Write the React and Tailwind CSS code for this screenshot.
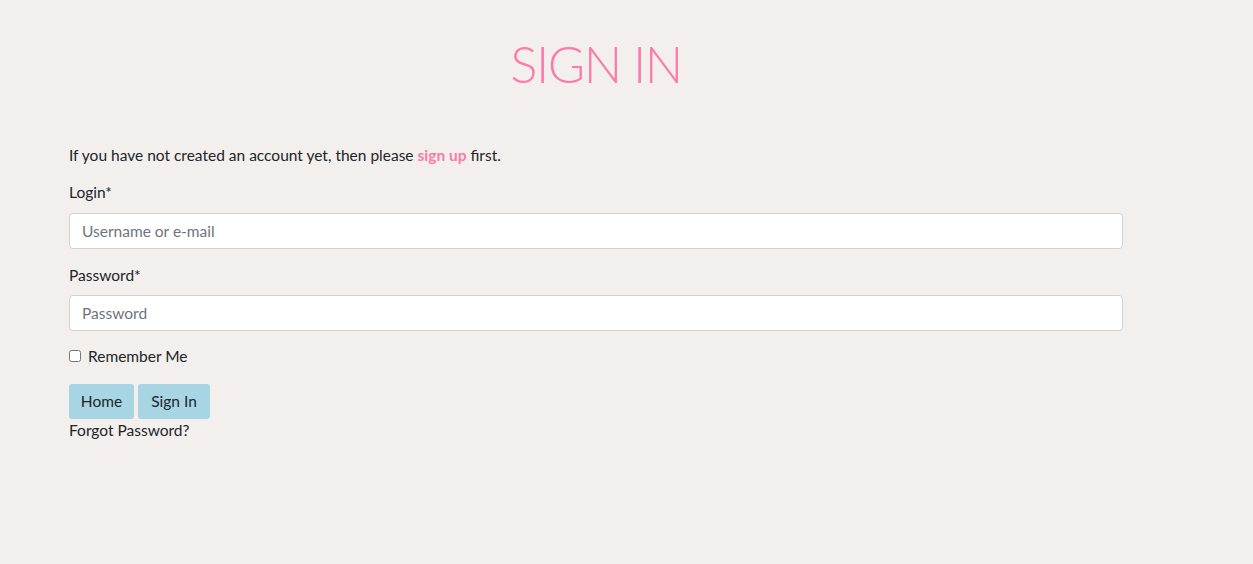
export default function App() {
    return (
        <div className="min-h-screen w-full bg-[#f3efec] text-[#212529] font-['Lato','Noto_Sans',sans-serif] text-[15.5px]">
            <div className="ml-[69px] w-[1054px] pt-[36px]">
                <h1 className="text-center text-[51px] leading-[56px] font-light tracking-[-1.5px] text-[#fd7aa9] font-['Lato',sans-serif]">
                    SIGN IN
                </h1>

                <p className="mt-[52px] leading-[22px]">
                    If you have not created an account yet, then please{' '}
                    <a href="#" className="font-bold text-[#fd7aa9]">
                        sign up
                    </a>{' '}
                    first.
                </p>

                <form className="flex flex-col">
                    <label className="mt-[15px] leading-[22px]">Login*</label>
                    <input
                        type="text"
                        placeholder="Username or e-mail"
                        className="mt-[10px] h-[36px] w-full rounded-[4px] border border-[#ced4da] bg-white px-[12px] placeholder-[#6c757d] outline-none"
                    />

                    <label className="mt-[15px] leading-[22px]">Password*</label>
                    <input
                        type="password"
                        placeholder="Password"
                        className="mt-[9px] h-[36px] w-full rounded-[4px] border border-[#ced4da] bg-white px-[12px] placeholder-[#6c757d] outline-none"
                    />

                    <label className="mt-[14px] flex items-center gap-[7px] leading-[22px]">
                        <input type="checkbox" className="h-[12px] w-[12px] m-0" />
                        Remember Me
                    </label>

                    <div className="mt-[17px] flex gap-[4px]">
                        <button type="button" className="h-[35px] w-[65px] rounded-[3px] bg-[#a8d5e3] text-[#212529]">
                            Home
                        </button>
                        <button type="submit" className="h-[35px] w-[72px] rounded-[3px] bg-[#a8d5e3] text-[#212529]">
                            Sign In
                        </button>
                    </div>

                    <a href="#" className="leading-[22px] self-start">
                        Forgot Password?
                    </a>
                </form>
            </div>
        </div>
    );
}
